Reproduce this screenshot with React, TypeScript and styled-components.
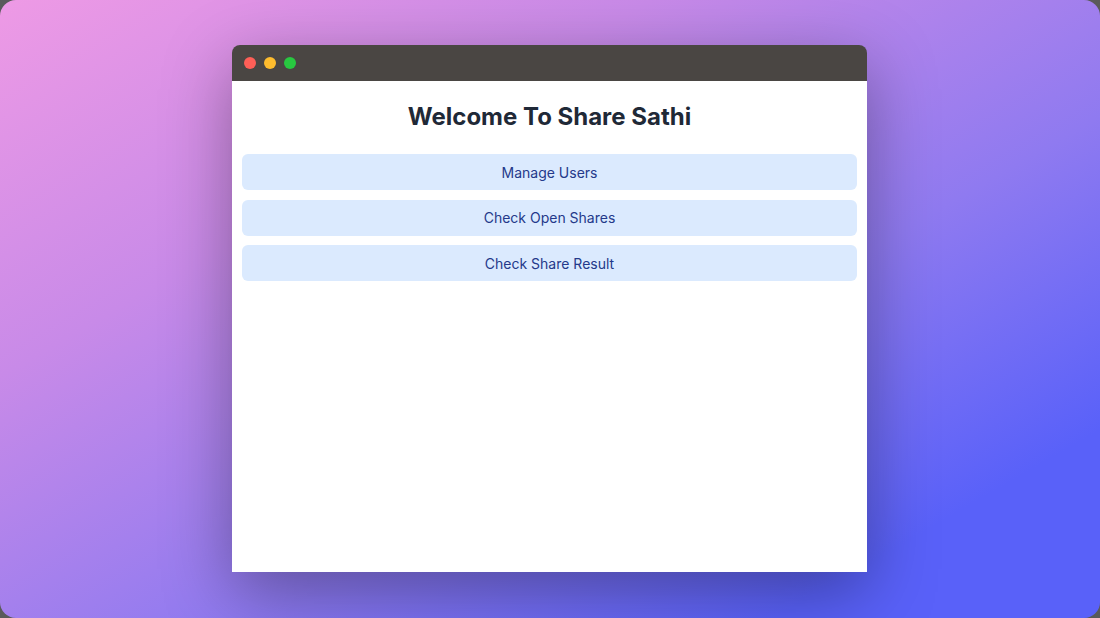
import React from "react";
import styled, { createGlobalStyle } from "styled-components";

const Global = createGlobalStyle`
  html, body { margin: 0; padding: 0; background: #5a5a5a; }
  body { font-family: Inter, "Noto Sans", sans-serif; }
`;

const Stage = styled.div`
  width: 1100px;
  height: 618px;
  box-sizing: border-box;
  padding: 0 1px 1px 0;
  border-radius: 16px;
  overflow: hidden;
  background: linear-gradient(150deg, #ee9ae5 0%, #c88ae8 30%, #8f7af0 60%, #5961f9 85%);
  display: flex;
  align-items: center;
  justify-content: center;
`;

const Window = styled.div`
  width: 635px;
  height: 527px;
  display: flex;
  flex-direction: column;
  box-shadow: 0 20px 68px rgba(0, 0, 0, 0.35);
  border-radius: 8px 8px 0 0;
`;

const TitleBar = styled.div`
  height: 36px;
  flex: none;
  background: #4a4643;
  border-radius: 8px 8px 0 0;
  display: flex;
  align-items: center;
  gap: 8px;
  padding-left: 12px;
`;

const Dot = styled.span<{ $c: string }>`
  width: 12px;
  height: 12px;
  border-radius: 50%;
  background: ${(p) => p.$c};
`;

const Content = styled.div`
  flex: 1;
  background: #ffffff;
  padding: 20px 10px 10px;
  display: flex;
  flex-direction: column;
`;

const Heading = styled.h1`
  margin: 0 0 21px;
  font-size: 24px;
  line-height: 32px;
  font-weight: 700;
  color: #1f2937;
  text-align: center;
`;

const Menu = styled.div`
  display: flex;
  flex-direction: column;
  gap: 9.5px;
`;

const MenuButton = styled.button`
  height: 36px;
  border: none;
  border-radius: 6px;
  background: #dbeafe;
  color: #24398a;
  font-family: Inter, "Noto Sans", sans-serif;
  font-size: 14px;
  font-weight: 400;
  cursor: pointer;
`;

export default function App() {
  return (
    <>
      <Global />
      <Stage>
        <Window>
          <TitleBar>
            <Dot $c="#fe5f57" />
            <Dot $c="#febc2e" />
            <Dot $c="#28c840" />
          </TitleBar>
          <Content>
            <Heading>Welcome To Share Sathi</Heading>
            <Menu>
              <MenuButton>Manage Users</MenuButton>
              <MenuButton>Check Open Shares</MenuButton>
              <MenuButton>Check Share Result</MenuButton>
            </Menu>
          </Content>
        </Window>
      </Stage>
    </>
  );
}
